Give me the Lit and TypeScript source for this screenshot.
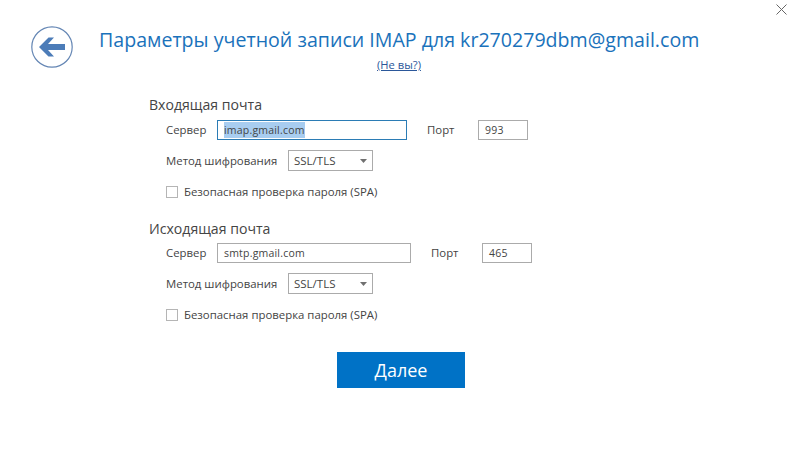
import { LitElement, html, css } from "lit";
import { customElement } from "lit/decorators.js";

const section = (
  title: string,
  server: string,
  port: string,
  serverW: number,
  selected: boolean,
) => html`
  <section class="section ${selected ? "" : "outgoing"}">
    <h2 class="heading">${title}</h2>
    <div class="row server-row">
      <span class="label server-label">Сервер</span>
      <div class="field ${selected ? "focused" : ""}" style="width:${serverW}px">
        ${selected ? html`<span class="sel">${server}</span>` : server}
      </div>
      <span class="label port-label">Порт</span>
      <div class="field port">${port}</div>
    </div>
    <div class="row method-row">
      <span class="label method-label">Метод шифрования</span>
      <div class="select">
        <span>SSL/TLS</span>
        <svg width="7" height="4" viewBox="0 0 7 4"><path d="M0 0h7L3.5 4z" fill="#707070" /></svg>
      </div>
    </div>
    <label class="row check-row">
      <span class="box"></span>
      <span class="label">Безопасная проверка пароля (SPA)</span>
    </label>
  </section>
`;

@customElement("app-root")
export class AppRoot extends LitElement {
  static styles = css`
    :host {
      display: block;
      width: 795px;
      height: 463px;
      background: #fff;
      font-family: "Open Sans", "Noto Sans", sans-serif;
      color: #444;
      position: relative;
      overflow: hidden;
    }
    .close {
      position: absolute;
      top: 3px;
      right: 7px;
    }
    header {
      display: flex;
      padding: 26px 0 0 31px;
      height: 74px;
      box-sizing: border-box;
    }
    .back {
      flex: none;
      width: 42px;
      height: 42px;
    }
    .head-text {
      margin-left: 26px;
      width: 600px;
      text-align: center;
    }
    h1 {
      margin: 0;
      font-size: 19.6px;
      line-height: 28px;
      font-weight: 400;
      color: #1a72bb;
      white-space: nowrap;
    }
    .who {
      display: block;
      margin-top: 3px;
      font-size: 11.2px;
      line-height: 15px;
      color: #2b579a;
      text-decoration: underline;
    }
    main {
      padding: 21px 0 0 149px;
    }
    .section {
      display: flex;
      flex-direction: column;
      height: 123px;
    }
    .heading {
      margin: 0;
      font-size: 14.1px;
      line-height: 20px;
      font-weight: 400;
      color: #444;
      white-space: nowrap;
    }
    .outgoing .heading {
      margin-top: 1px;
    }
    .row {
      display: flex;
      align-items: center;
      padding-left: 17px;
    }
    .label {
      font-size: 11.4px;
      line-height: 16px;
      color: #444;
      white-space: nowrap;
    }
    .server-row {
      height: 20px;
      margin-top: 5px;
    }
    .outgoing .server-row {
      margin-top: 4px;
    }
    .server-label {
      width: 51px;
      flex: none;
    }
    .field {
      box-sizing: border-box;
      height: 20px;
      border: 1px solid #ababab;
      padding-left: 6px;
      font-size: 10.5px;
      line-height: 18px;
      letter-spacing: 0.2px;
      color: #444;
      flex: none;
    }
    .focused {
      border-color: #2b7cb5;
    }
    .sel {
      background: #a8cdf0;
      display: inline-block;
      line-height: 16px;
    }
    .port-label {
      margin-left: 20px;
      width: 51px;
      flex: none;
    }
    .port {
      width: 50px;
    }
    .method-row {
      height: 21px;
      margin-top: 10px;
    }
    .method-label {
      width: 122px;
      flex: none;
    }
    .select {
      box-sizing: border-box;
      width: 85px;
      height: 21px;
      border: 1px solid #ababab;
      padding: 0 5px;
      display: flex;
      align-items: center;
      justify-content: space-between;
      font-size: 11.5px;
      color: #444;
    }
    .check-row {
      margin-top: 13px;
      height: 16px;
    }
    .box {
      box-sizing: border-box;
      width: 12px;
      height: 12px;
      border: 1px solid #b5b5b5;
      margin-right: 6px;
      flex: none;
    }
    .actions {
      padding: 0 0 0 337px;
      margin-top: 11px;
    }
    .next {
      display: block;
      width: 128px;
      height: 36px;
      border: 0;
      padding: 0;
      background: #0072c6;
      color: #fff;
      font-family: inherit;
      font-size: 18px;
      line-height: 36px;
      text-align: center;
    }
  `;

  render() {
    return html`
      <svg class="close" width="13" height="13" viewBox="0 0 13 13">
        <path d="M1.5 1.5l10 10M11.5 1.5l-10 10" stroke="#666" stroke-width="1" fill="none" />
      </svg>
      <header>
        <svg class="back" viewBox="0 0 42 42">
          <circle cx="21" cy="21" r="20.2" fill="#fff" stroke="#6486b4" stroke-width="1.2" />
          <path d="M8 21l9.5-9.5H23L17 18h17v6H17l6 6.5h-5.5z" fill="#4c7cb8" />
        </svg>
        <div class="head-text">
          <h1>Параметры учетной записи IMAP для kr270279dbm@gmail.com</h1>
          <a class="who">(Не вы?)</a>
        </div>
      </header>
      <main>
        ${section("Входящая почта", "imap.gmail.com", "993", 190, true)}
        ${section("Исходящая почта", "smtp.gmail.com", "465", 194, false)}
      </main>
      <div class="actions"><button class="next">Далее</button></div>
    `;
  }
}
